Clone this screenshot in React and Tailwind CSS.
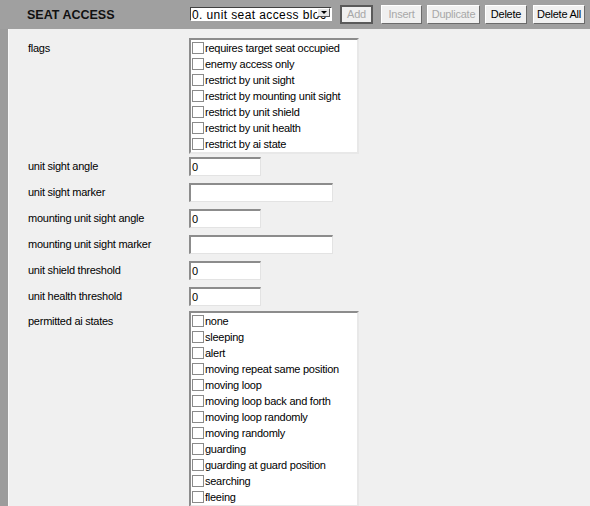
import React from "react";

const flags = [
  "requires target seat occupied",
  "enemy access only",
  "restrict by unit sight",
  "restrict by mounting unit sight",
  "restrict by unit shield",
  "restrict by unit health",
  "restrict by ai state",
];

const aiStates = [
  "none",
  "sleeping",
  "alert",
  "moving repeat same position",
  "moving loop",
  "moving loop back and forth",
  "moving loop randomly",
  "moving randomly",
  "guarding",
  "guarding at guard position",
  "searching",
  "fleeing",
];

function Check({ label }) {
  return (
    <div className="flex items-center h-[16px] pl-[1px]">
      <div className="w-[12px] h-[12px] border border-[#8a8a8a] bg-white shrink-0" />
      <span className="ml-[1px] whitespace-nowrap leading-none">{label}</span>
    </div>
  );
}

function ListBox({ items, className }) {
  return (
    <div
      className={
        "w-[170px] bg-white border-t-2 border-l-2 border-b-2 border-r-2 border-t-[#8c8c8c] border-l-[#8c8c8c] border-b-[#e8e8e8] border-r-[#e8e8e8] " +
        (className || "")
      }
    >
      {items.map((t) => (
        <Check key={t} label={t} />
      ))}
    </div>
  );
}

function TextBox({ value, wide }) {
  return (
    <div
      className={
        (wide ? "w-[144px]" : "w-[72px]") +
        " h-[19px] bg-white border-t-2 border-l-2 border-b border-r border-t-[#8c8c8c] border-l-[#8c8c8c] border-b-[#e3e3e3] border-r-[#e3e3e3] flex items-center pl-[1px] leading-none"
      }
    >
      {value}
    </div>
  );
}

function Btn({ children, disabled, focus, w, ml }) {
  return (
    <div
      className={
        w +
        " " +
        ml +
        " h-[19px] flex items-center justify-center bg-[#f0f0f0] leading-none " +
        (focus
          ? "border-2 border-[#5a5a5a] "
          : "border border-t-white border-l-white border-b-[#6b6b6b] border-r-[#6b6b6b] ") +
        (disabled ? "text-[#a8a8a8]" : "text-black")
      }
    >
      {children}
    </div>
  );
}

function Row({ label, children, mt }) {
  return (
    <div className={"flex items-center " + mt}>
      <div className="w-[161px] shrink-0">{label}</div>
      {children}
    </div>
  );
}

export default function App() {
  return (
    <div
      className="w-[590px] h-[506px] overflow-hidden bg-[#a0a0a0] flex flex-col text-[11px] tracking-[-0.25px] text-black"
      style={{ fontFamily: '"Liberation Sans", Arial, sans-serif' }}
    >
      <div className="h-[29px] shrink-0 flex items-start">
        <div className="w-[190px] shrink-0 pl-[27px] pt-[9px] text-[12.5px] font-bold tracking-normal text-[#111] leading-none">
          SEAT ACCESS
        </div>
        <div className="mt-[7px] w-[142px] h-[14px] shrink-0 bg-white border-t border-l border-t-[#404040] border-l-[#404040] border-b border-r border-b-white border-r-white flex items-start overflow-hidden relative">
          <span className="pl-[1px] pt-[1px] whitespace-nowrap leading-none text-[12px] tracking-[0.4px]">
            0. unit seat access bloc
          </span>
          <div className="absolute right-[1px] top-0 w-[13px] h-[9px] bg-[#e6e6e6] border border-t-white border-l-white border-b-[#555] border-r-[#555] flex items-center justify-center">
            <div className="w-0 h-0 border-l-[3px] border-r-[3px] border-t-[3px] border-l-transparent border-r-transparent border-t-black" />
          </div>
        </div>
        <div className="flex mt-[5px]">
          <Btn w="w-[33px]" ml="ml-[8px]" disabled focus>
            Add
          </Btn>
          <Btn w="w-[41px]" ml="ml-[8px]" disabled>
            Insert
          </Btn>
          <Btn w="w-[53px]" ml="ml-[5px]" disabled>
            Duplicate
          </Btn>
          <Btn w="w-[42px]" ml="ml-[5px]">
            Delete
          </Btn>
          <Btn w="w-[52px]" ml="ml-[6px]">
            Delete All
          </Btn>
        </div>
      </div>
      <div className="flex-1 flex min-h-0">
        <div className="w-[8px] bg-[#9c9c9c] shrink-0" />
        <div className="flex-1 bg-[#f0f0f0] border-l border-l-[#f8f8f8] pl-[19px] pt-[9px] flex flex-col">
          <div className="flex items-start">
            <div className="w-[161px] shrink-0 h-[16px] flex items-center mt-[2px]">flags</div>
            <ListBox items={flags} />
          </div>
          <Row label="unit sight angle" mt="mt-[3px]">
            <TextBox value="0" />
          </Row>
          <Row label="unit sight marker" mt="mt-[7px]">
            <TextBox value="" wide />
          </Row>
          <Row label="mounting unit sight angle" mt="mt-[7px]">
            <TextBox value="0" />
          </Row>
          <Row label="mounting unit sight marker" mt="mt-[7px]">
            <TextBox value="" wide />
          </Row>
          <Row label="unit shield threshold" mt="mt-[7px]">
            <TextBox value="0" />
          </Row>
          <Row label="unit health threshold" mt="mt-[7px]">
            <TextBox value="0" />
          </Row>
          <div className="flex items-start mt-[5px]">
            <div className="w-[161px] shrink-0 h-[16px] flex items-center mt-[2px]">permitted ai states</div>
            <ListBox items={aiStates} />
          </div>
        </div>
      </div>
    </div>
  );
}
